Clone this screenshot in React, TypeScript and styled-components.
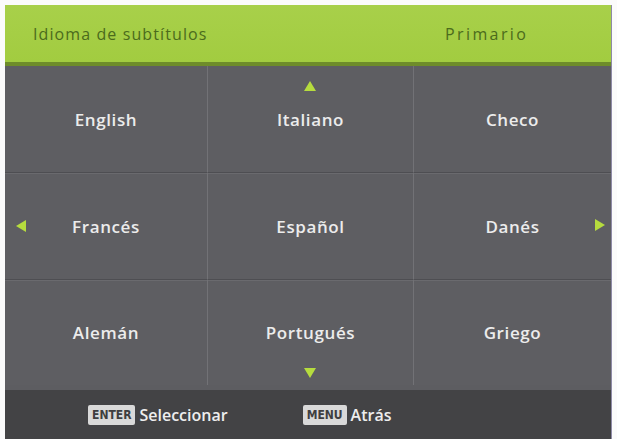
import React from "react";
import styled, { createGlobalStyle } from "styled-components";

const Global = createGlobalStyle`
  html, body { margin: 0; padding: 0; background: #ffffff; }
  body { font-family: "Open Sans", "DejaVu Sans", sans-serif; }
`;

const Screen = styled.div`
  width: 617px;
  height: 439px;
  padding: 5px 5px 0 5px;
  box-sizing: border-box;
  background: #fbfbfb;
`;

const Panel = styled.div`
  height: 434px;
  display: flex;
  flex-direction: column;
  background: #5d5d61;
  border-right: 1px solid #8e8aa6;
`;

const Header = styled.div`
  height: 57px;
  display: flex;
  align-items: center;
  padding: 0 0 0 28px;
  background: linear-gradient(#a8d04a, #a2cc40);
  border-bottom: 4px solid #6e8c2a;
  color: #4b6b1c;
  font-size: 16px;
  letter-spacing: 1.1px;
`;

const Title = styled.span`
  flex: 1;
`;

const Mode = styled.span`
  width: 166px;
  letter-spacing: 2.4px;
`;

const Grid = styled.div`
  flex: 1;
  display: grid;
  grid-template-columns: 202px 206px 1fr;
  grid-template-rows: 106px 107px 106px;
`;

const Cell = styled.div<{ $col: number; $row: number }>`
  position: relative;
  display: flex;
  align-items: center;
  justify-content: center;
  color: #ececec;
  font-size: 17px;
  font-weight: 600;
  letter-spacing: 0.6px;
  background: #5e5e62;
  border-left: ${(p) => (p.$col > 0 ? "1px solid #727276" : "none")};
  border-top: ${(p) => (p.$row > 0 ? "1px solid #4e4e52" : "none")};
  box-shadow: ${(p) => (p.$row > 0 ? "inset 0 1px 0 #6a6a6e" : "none")};
`;

const Arrow = styled.svg<{ $at: "up" | "down" | "left" | "right" }>`
  position: absolute;
  width: 12px;
  height: 12px;
  fill: #b6dc3e;
  ${(p) =>
    p.$at === "up"
      ? "top: 14px; left: 50%; margin-left: -7px;"
      : p.$at === "down"
      ? "bottom: 6px; left: 50%; margin-left: -7px;"
      : p.$at === "left"
      ? "left: 10px; top: 50%; margin-top: -6px;"
      : "right: 5px; top: 50%; margin-top: -7px;"}
`;

const Footer = styled.div`
  height: 49px;
  display: flex;
  align-items: center;
  background: #434345;
  color: #eeeeee;
  font-size: 16px;
  font-weight: 600;
`;

const Hint = styled.div<{ $w: number }>`
  display: flex;
  align-items: center;
  gap: 4px;
  margin-left: ${(p) => p.$w}px;
`;

const Key = styled.span`
  display: inline-flex;
  align-items: center;
  justify-content: center;
  height: 20px;
  padding: 0 4px;
  background: #d9d9d9;
  color: #3e3e40;
  font-family: "DejaVu Sans Condensed", "DejaVu Sans", sans-serif;
  font-size: 12px;
  font-weight: 700;
  border-radius: 2px;
`;

const ARROWS: Record<string, string> = {
  up: "6,1 12,11 0,11",
  down: "0,1 12,1 6,11",
  left: "11,0 11,12 1,6",
  right: "1,0 1,12 11,6",
};

type Dir = "up" | "down" | "left" | "right";

const languages: { name: string; arrow?: Dir }[] = [
  { name: "English" },
  { name: "Italiano", arrow: "up" },
  { name: "Checo" },
  { name: "Francés", arrow: "left" },
  { name: "Español" },
  { name: "Danés", arrow: "right" },
  { name: "Alemán" },
  { name: "Portugués", arrow: "down" },
  { name: "Griego" },
];

export default function App() {
  return (
    <>
      <Global />
      <Screen>
        <Panel>
          <Header>
            <Title>Idioma de subtítulos</Title>
            <Mode>Primario</Mode>
          </Header>
          <Grid>
            {languages.map((l, i) => (
              <Cell key={l.name} $col={i % 3} $row={Math.floor(i / 3)}>
                {l.arrow && (
                  <Arrow $at={l.arrow} viewBox="0 0 12 12">
                    <polygon points={ARROWS[l.arrow]} />
                  </Arrow>
                )}
                {l.name}
              </Cell>
            ))}
          </Grid>
          <Footer>
            <Hint $w={83}>
              <Key>ENTER</Key>
              Seleccionar
            </Hint>
            <Hint $w={75}>
              <Key>MENU</Key>
              Atrás
            </Hint>
          </Footer>
        </Panel>
      </Screen>
    </>
  );
}
